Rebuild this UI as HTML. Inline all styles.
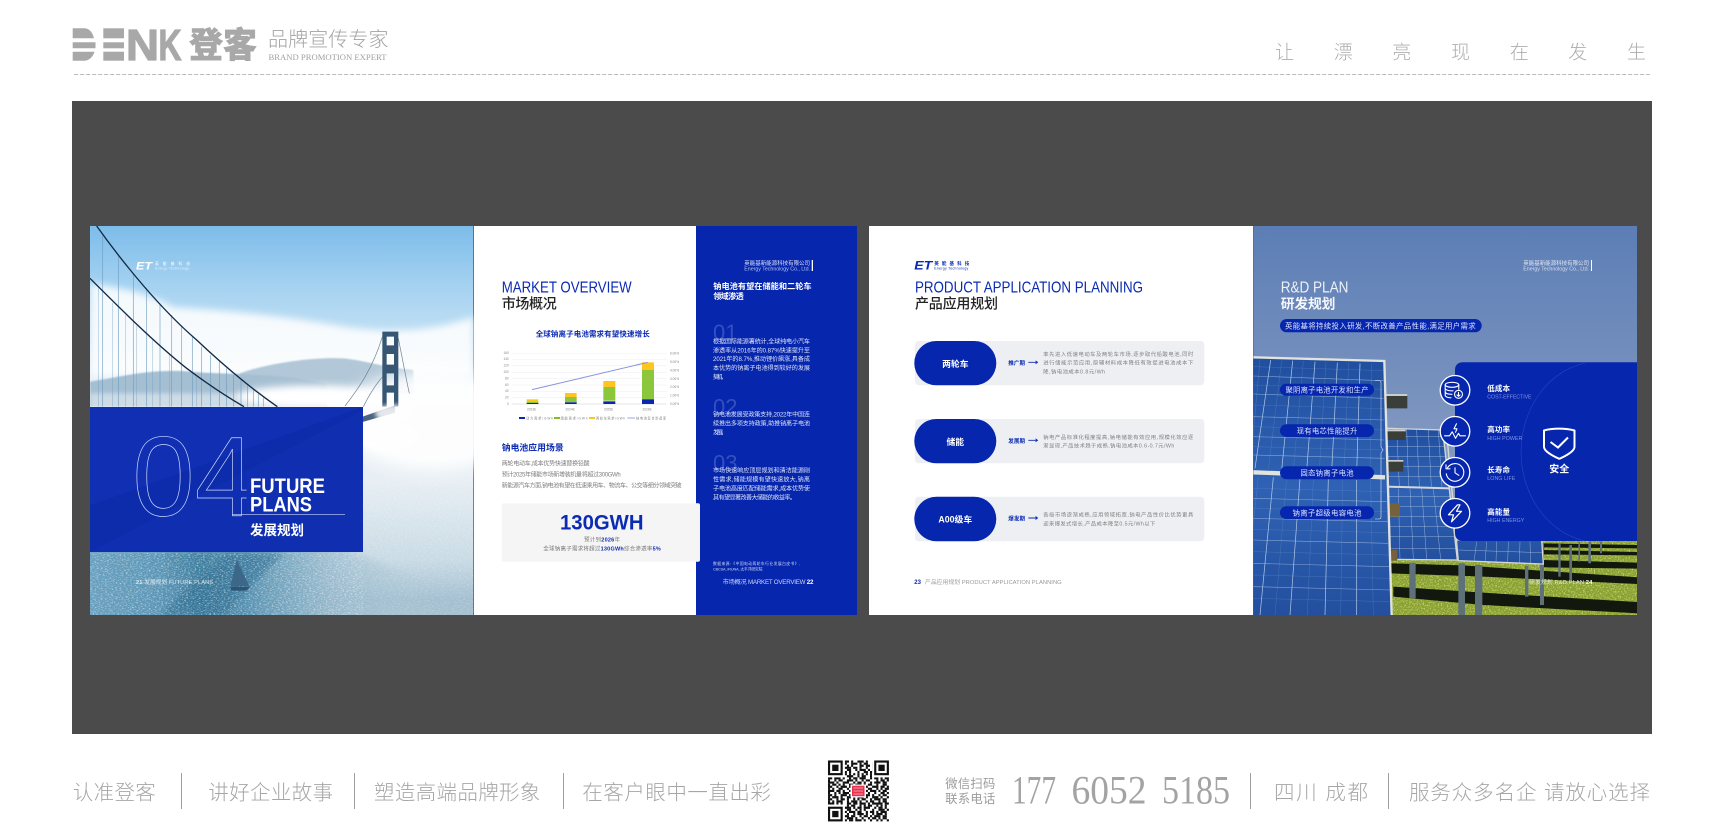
<!DOCTYPE html>
<html lang="zh"><head><meta charset="utf-8"><title>登客 DENK</title>
<style>
html,body{margin:0;padding:0;background:#fff;width:1717px;height:840px;overflow:hidden}
svg{display:block}
text{font-family:"Liberation Sans","Noto Sans CJK SC",sans-serif}
.t{font-weight:300;fill:#a6a6a6;font-size:20.5px}
.b{font-weight:700}
.w{fill:#fff}
.bl{fill:#0b2bb3}
.p{font-size:6px;fill:#7d7d7d}
.q{font-size:6.1px;fill:#dfe4fa}
.r{font-size:5.3px;fill:#7f7f7f}
.pw{font-size:7.4px;fill:#dfe4ff;text-anchor:middle}
.tick{font-size:3.2px;fill:#888}
.lab{font-size:7.5px;font-weight:700;fill:#fff}
.en{font-size:5.3px;fill:#8093e6}
.ser{font-family:"Liberation Serif","Noto Serif CJK SC",serif}
</style></head><body>
<svg width="1717" height="840" viewBox="0 0 1717 840" xmlns="http://www.w3.org/2000/svg">
<defs>
<filter id="b6" x="-30%" y="-30%" width="160%" height="160%"><feGaussianBlur stdDeviation="6"/></filter>
<filter id="b10" x="-20%" y="-30%" width="140%" height="160%"><feGaussianBlur stdDeviation="11"/></filter>
<filter id="b20" x="-40%" y="-60%" width="180%" height="220%"><feGaussianBlur stdDeviation="22"/></filter>
<filter id="b2"><feGaussianBlur stdDeviation="2.5"/></filter>
<filter id="spark" x="0" y="0" width="100%" height="100%"><feTurbulence type="fractalNoise" baseFrequency=".16 .42" numOctaves="2" seed="4"/><feColorMatrix values="0 0 0 0 1 0 0 0 0 1 0 0 0 0 1 3.2 0 0 0 -1.6"/></filter>
<filter id="grass" x="0" y="0" width="100%" height="100%"><feTurbulence type="fractalNoise" baseFrequency=".22" numOctaves="2" seed="9"/><feColorMatrix values="0 0 0 0 .86 0 0 0 0 .82 0 0 0 0 .25 2.6 0 0 0 -1.2"/></filter>
<linearGradient id="sky1" x1="0" y1="0" x2="0" y2="1"><stop offset="0" stop-color="#7dbcea"/><stop offset=".14" stop-color="#a1d0f0"/><stop offset=".3" stop-color="#c6e2f4"/><stop offset=".42" stop-color="#ecf3f8"/><stop offset=".65" stop-color="#e8eff4"/><stop offset=".86" stop-color="#c8dae4"/><stop offset=".96" stop-color="#a3bfd0"/><stop offset="1" stop-color="#a5c0cf"/></linearGradient>
<linearGradient id="water" x1="0" y1="0" x2="1" y2="0"><stop offset="0" stop-color="#6da3c1"/><stop offset=".22" stop-color="#5c96b6"/><stop offset=".32" stop-color="#3f7e9f"/><stop offset=".44" stop-color="#5a94b3"/><stop offset=".62" stop-color="#8fb4c9" stop-opacity=".75"/><stop offset=".88" stop-color="#b5cedb" stop-opacity="0"/></linearGradient>
<linearGradient id="sky2" x1="0" y1="0" x2="0" y2="1"><stop offset="0" stop-color="#5c7eb6"/><stop offset=".5" stop-color="#7d95bf"/><stop offset="1" stop-color="#98abc8"/></linearGradient>
<linearGradient id="pv" x1="0" y1="0" x2="0" y2="1"><stop offset="0" stop-color="#214f9f"/><stop offset=".5" stop-color="#2f62b4"/><stop offset="1" stop-color="#234f9e"/></linearGradient>
<clipPath id="c1"><rect x="90" y="226" width="384" height="389"/></clipPath>
<clipPath id="c2"><rect x="1253" y="226" width="384" height="389"/></clipPath>
</defs>

<!-- header -->
<g fill="#a8a8a8" stroke="#a8a8a8" stroke-width="1.200">
<text x="126" y="60" font-size="44" font-weight="700" textLength="33" lengthAdjust="spacingAndGlyphs">N</text>
<text x="158.500" y="60" font-size="44" font-weight="700" textLength="23" lengthAdjust="spacingAndGlyphs">K</text>
</g>
<text x="72" y="60" font-size="44" font-weight="700" fill="#a8a8a8" textLength="52" lengthAdjust="spacingAndGlyphs">DE</text>
<rect x="70" y="26" width="56" height="36" fill="#fff"/>
<g fill="#a8a8a8"><rect x="103.300" y="28.300" width="20.700" height="10"/><rect x="103.300" y="42.300" width="20.700" height="6"/><rect x="103.300" y="51.700" width="20.700" height="9"/>
<path d="M72.700 28.300H84C89 28.300 92.500 32 94 38.300H72.700ZM72.700 42.300H95.500V48.300H72.700ZM72.700 51.700H94.500C93 57 89 60.700 84 60.700H72.700Z"/></g>
<text x="189" y="57.500" font-size="35" font-weight="900" fill="#a8a8a8" stroke="#a8a8a8" stroke-width=".5" textLength="68" lengthAdjust="spacingAndGlyphs">登客</text>
<text x="268" y="46" font-size="20" font-weight="300" fill="#a3a3a3" textLength="120.500">品牌宣传专家</text>
<text x="268.500" y="60" font-size="8.600" fill="#a0a0a0" class="ser" textLength="118" lengthAdjust="spacingAndGlyphs">BRAND PROMOTION EXPERT</text>
<text x="1275 1333.700 1392.300 1451 1509.700 1568.300 1627" y="58.500" font-size="19" font-weight="300" fill="#adadad">让漂亮现在发生</text>
<path d="M74 74.500H1650" stroke="#bdbdbd" stroke-width="1" stroke-dasharray="4.300 1.700"/>

<rect x="72" y="101" width="1580" height="633" fill="#4b4b4b"/>

<!-- spread 1 : page photo -->
<g clip-path="url(#c1)"><g transform="translate(80 220) scale(.33333)">
<rect x="30" y="18" width="1150" height="1167" fill="url(#sky1)"/>
<path d="M30 190C100 200 200 215 280 262C400 268 600 285 800 322C950 342 1080 330 1180 290V470H30Z" fill="#fff" opacity=".88" filter="url(#b10)"/>
<path d="M480 460C560 430 700 410 790 415C850 420 900 440 1000 450L1000 520H480Z" fill="#b2c8d8" filter="url(#b2)"/>
<path d="M30 485C120 470 220 445 330 455C430 465 560 455 740 490L740 560H30Z" fill="#a5bfd2" filter="url(#b2)"/>
<path d="M30 520H740L800 560V570H30Z" fill="#eef3f7" opacity=".55" filter="url(#b6)"/>
<ellipse cx="1060" cy="600" rx="280" ry="150" fill="#fff" opacity=".92" filter="url(#b20)"/>
<ellipse cx="700" cy="530" rx="230" ry="34" fill="#fff" filter="url(#b10)"/>
<path d="M-40 985H790L1220 1150V1240H-40Z" fill="url(#water)" filter="url(#b10)"/>
<path d="M240 1185L440 1000H610L430 1185Z" fill="#2f6d92" opacity=".5" filter="url(#b6)"/>
<rect x="850" y="780" width="330" height="405" filter="url(#spark)" opacity=".3"/>
<rect x="30" y="1000" width="820" height="185" filter="url(#spark)" opacity=".62"/>
<path d="M470 1020L452 1098H508Z" fill="#3c6788"/><path d="M450 1100H510L500 1112H455Z" fill="#2d5573"/>
<!-- hangers -->
<g stroke="#6f9cc0" stroke-width="2.200" opacity=".85" fill="none">
<path d="M68 45V560M115 108V560M160 160V560M200 205V560M240 250V560M275 285V560M305 318V560M337 350V560M365 380V560M392 405V560M418 425V560M440 445V560M461 465V560M483 480V560M503 497V560M520 510V560M535 522V560M550 533V560"/>
<path d="M55 198V560M98 248V560M137 285V560M170 318V560M218 360V560M268 405V560M350 470V560" opacity=".6"/></g>
<path d="M50 18C130 130 240 265 350 360C440 445 520 510 592 560" fill="none" stroke="#122a46" stroke-width="4"/>
<path d="M30 175C120 265 220 365 320 445C380 490 440 530 492 560" fill="none" stroke="#122a46" stroke-width="4"/>
<!-- tower -->
<g><path d="M795 558C840 500 880 440 907 350M850 560C870 520 890 490 908 470M955 355C968 420 978 475 988 520" stroke="#6b7e90" stroke-width="2" fill="none"/>
<path fill-rule="evenodd" fill="#365673" d="M907 335H955V560H907ZM920 350V376H942V350ZM920 402V434H942V402ZM920 460V496H942V460ZM920 518V560H942V518Z"/>
<path d="M848 590L945 556V578L848 606Z" fill="#4a6580"/></g>
<ellipse cx="940" cy="580" rx="55" ry="26" fill="#fff" opacity=".85" filter="url(#b6)"/>
<ellipse cx="920" cy="650" rx="90" ry="40" fill="#fff" opacity=".8" filter="url(#b6)"/>
</g></g>
<!-- overlay -->
<rect x="90" y="407" width="273" height="145" fill="#102fb3"/>
<path d="M90 506L363 407V410L90 552Z" fill="#0c29a6" opacity=".55"/><path d="M90 552V505L363 407V552Z" fill="#0c2aa8" opacity=".25"/>
<text x="132.500" y="515.500" font-size="113" fill="none" stroke="#cdd6fb" stroke-width=".7" textLength="62" lengthAdjust="spacingAndGlyphs">0</text>
<text x="195" y="515.500" font-size="113" fill="none" stroke="#cdd6fb" stroke-width=".7" textLength="60" lengthAdjust="spacingAndGlyphs">4</text>
<rect x="246.500" y="470" width="6.500" height="43" fill="#102fb3"/>
<path d="M232 514.300H345" stroke="#cdd6fb" stroke-width=".7"/>
<text x="250" y="493" font-size="21" class="b w" textLength="75" lengthAdjust="spacingAndGlyphs">FUTURE</text>
<text x="250" y="511.500" font-size="21" class="b w" textLength="62" lengthAdjust="spacingAndGlyphs">PLANS</text>
<text x="250" y="535" font-size="13.500" class="b w" textLength="54">发展规划</text>
<text x="136" y="269.500" font-size="11" font-style="italic" class="b w" textLength="16" lengthAdjust="spacingAndGlyphs">ET</text>
<text x="155" y="265" font-size="3.800" class="w" textLength="35">英能基科技</text>
<text x="155" y="269.500" font-size="3.400" fill="#e8f2fa" textLength="34">Energy Technology</text>
<text x="136" y="584" font-size="5.600" fill="#dfe9f0" textLength="77"><tspan class="b">21</tspan> 发展规划 FUTURE PLANS</text>

<!-- page 2 white -->
<rect x="474" y="226" width="222" height="389" fill="#fff"/>
<rect x="696" y="226" width="161" height="389" fill="#0526ad"/>
<text x="501.700" y="292.700" font-size="15.500" class="bl" textLength="130" lengthAdjust="spacingAndGlyphs">MARKET OVERVIEW</text>
<text x="501.700" y="308.700" font-size="14" font-weight="500" fill="#222" textLength="55">市场概况</text>
<text x="535.700" y="336.500" font-size="7.500" class="b bl" textLength="114">全球钠离子电池需求有望快速增长</text>
<!-- chart -->
<g transform="translate(470 220) scale(.33333)">
<path d="M125 400H590M125 418H590M125 437H590M125 457H590M125 476H590M125 495H590M125 514H590M125 533H590" stroke="#ececec" stroke-width="1.500"/>
<path d="M125 552H590" stroke="#ccc" stroke-width="1.500"/>
<g fill="#ffc51e"><rect x="170" y="538" width="35" height="7"/><rect x="285" y="519" width="35" height="12"/><rect x="400" y="483" width="36" height="18"/><rect x="516" y="427" width="36" height="23"/></g>
<g fill="#8cc63a"><rect x="170" y="545" width="35" height="4"/><rect x="285" y="531" width="35" height="16"/><rect x="400" y="501" width="36" height="41"/><rect x="516" y="450" width="36" height="88"/></g>
<g fill="#0a25b0"><rect x="170" y="549" width="35" height="3"/><rect x="285" y="547" width="35" height="5"/><rect x="400" y="544" width="36" height="8"/><rect x="516" y="538" width="36" height="14"/></g>
<path d="M186 509L533 427" stroke="#8a93e0" stroke-width="3"/>
<rect x="147" y="591" width="18" height="6" fill="#0a25b0"/><rect x="252" y="591" width="18" height="6" fill="#7ec11f"/><rect x="357" y="591" width="18" height="6" fill="#ffc51e"/><path d="M472 594H495" stroke="#8a93e0" stroke-width="2.500"/>
</g>
<g class="tick">
<text x="503.500" y="354">160</text><text x="503.500" y="360">140</text><text x="503.500" y="366.500">120</text><text x="503.500" y="373">100</text><text x="505" y="379.500">80</text><text x="505" y="386">60</text><text x="505" y="392">40</text><text x="505" y="398.500">20</text><text x="507" y="405">0</text>
<text x="670" y="354.500">6.00%</text><text x="670" y="363">5.00%</text><text x="670" y="371.500">4.00%</text><text x="670" y="380">3.00%</text><text x="670" y="388">2.00%</text><text x="670" y="396.500">1.00%</text><text x="670" y="405">0.00%</text>
<text x="527" y="410.500">2023E</text><text x="565.500" y="410.500">2024E</text><text x="604" y="410.500">2025E</text><text x="642.500" y="410.500">2026E</text>
<text x="526" y="419.500" textLength="27">动力需求/GWh</text><text x="560.500" y="419.500" textLength="27">储能需求/GWh</text><text x="596" y="419.500" textLength="29">两轮车需求/GWh</text><text x="636" y="419.500" textLength="30">钠电池复合渗透率</text>
</g>
<text x="501.700" y="450.500" font-size="8.800" class="b bl" textLength="62">钠电池应用场景</text>
<text x="501.700" y="465.700" class="p" textLength="88">两轮电动车,成本优势快速替换铅酸</text>
<text x="501.700" y="476.700" class="p" textLength="119">预计2025年储能市场新增装机量将超过300GWh</text>
<text x="501.700" y="487.700" class="p" textLength="180">新能源汽车方面,钠电池有望在低速乘用车、物流车、公交等细分领域突破</text>
<rect x="501.700" y="503.300" width="198.300" height="58.400" rx="2" fill="#f5f5f5"/>
<text x="560" y="529.300" font-size="21" class="b bl" textLength="83.500" lengthAdjust="spacingAndGlyphs">130GWH</text>
<text x="584" y="541.500" font-size="5.500" fill="#777" textLength="36">预计到<tspan class="b bl">2026</tspan>年</text>
<text x="543.300" y="550.500" font-size="5.500" fill="#777" textLength="117.500">全球钠离子需求将超过<tspan class="b bl">130GWh</tspan>综合渗透率<tspan class="b bl">5%</tspan></text>

<!-- blue column -->
<text x="744.300" y="265" font-size="5.500" fill="#dfe4fa" textLength="65.700">英能基新能源科技有限公司</text>
<text x="744.300" y="270.700" font-size="5.300" fill="#b9c4f2" textLength="65.700">Energy Technology Co., Ltd.</text>
<rect x="811.700" y="260" width="1.300" height="11" fill="#fff"/>
<text x="713.300" y="289" font-size="8.200" class="b w" textLength="98.300">钠电池有望在储能和二轮车</text>
<text x="713.300" y="299" font-size="8" class="b w" textLength="30.500">领域渗透</text>
<g font-size="22" fill="#3450c0"><text x="713" y="340">01</text><text x="713" y="414.500">02</text><text x="713" y="470.500">03</text></g>
<text x="713" y="343.300" class="q" textLength="97">根据国际能源署统计,全球纯电小汽车</text>
<text x="713" y="352.300" class="q" textLength="97">渗透率从2016年的0.87%快速提升至</text>
<text x="713" y="361.200" class="q" textLength="97">2021年的8.7%,推动锂价飙涨,具备成</text>
<text x="713" y="370" class="q" textLength="97">本优势的钠离子电池得到较好的发展</text>
<text x="713" y="379" class="q" textLength="13.500">契机。</text>
<text x="713" y="416.700" class="q" textLength="97">钠电池发展受政策支持,2022年中国连</text>
<text x="713" y="425.700" class="q" textLength="97">续推出多项支持政策,助推钠离子电池</text>
<text x="713" y="434.700" class="q" textLength="14">发展。</text>
<text x="713" y="472.700" class="q" textLength="97">市场快速响应顶层规划和清洁能源刚</text>
<text x="713" y="481.700" class="q" textLength="97">性需求,储能规模有望快速放大,钠离</text>
<text x="713" y="490.300" class="q" textLength="97">子电池高度匹配储能需求,成本优势使</text>
<text x="713" y="499.300" class="q" textLength="83">其有望显著改善大储能的收益率。</text>
<text x="713" y="565" font-size="3.800" fill="#cfd6f6" textLength="87">数据来源:《中国电动两轮车行业发展白皮书》,</text>
<text x="713" y="570.500" font-size="3.800" fill="#cfd6f6" textLength="49.500">CBCSA, IRUNA, 太平洋研究院</text>
<text x="722.700" y="584" font-size="6.200" fill="#cfd6f6" textLength="90.700">市场概况 MARKET OVERVIEW <tspan class="b w">22</tspan></text>

<!-- spread 2 left -->
<rect x="869" y="226" width="384" height="389" fill="#fff"/>
<text x="914.300" y="269.500" font-size="12" font-style="italic" class="b bl" textLength="18" lengthAdjust="spacingAndGlyphs">ET</text>
<text x="934.300" y="265" font-size="4.600" class="b bl" textLength="35">英能基科技</text>
<text x="934.300" y="269.500" font-size="3.500" class="bl" textLength="34">Energy Technology</text>
<text x="915" y="292.700" font-size="15.500" class="bl" textLength="228" lengthAdjust="spacingAndGlyphs">PRODUCT APPLICATION PLANNING</text>
<text x="915" y="308.700" font-size="14" font-weight="500" fill="#222" textLength="83">产品应用规划</text>
<g fill="#eeeff3"><rect x="915" y="341" width="289.300" height="44.300" rx="4"/><rect x="915" y="419" width="289.300" height="44.300" rx="4"/><rect x="915" y="496.700" width="289.300" height="44.600" rx="4"/></g>
<g fill="#0526ad"><rect x="914.300" y="341" width="82" height="44.300" rx="22.100"/><rect x="914.300" y="419" width="82" height="44.300" rx="22.100"/><rect x="914.300" y="496.700" width="82" height="44.600" rx="22.300"/></g>
<g font-size="8.800" class="b w" text-anchor="middle"><text x="955.300" y="367">两轮车</text><text x="955.300" y="445">储能</text><text x="955.300" y="522.700">A00级车</text></g>
<g font-size="5.500" class="b bl"><text x="1008.300" y="365" textLength="16.700">推广期</text><text x="1008.300" y="443" textLength="16.700">发展期</text><text x="1008.300" y="520.500" textLength="16.700">爆发期</text></g>
<g stroke="#0b2bb3" stroke-width=".9" fill="none"><path d="M1028.300 362.300H1037.500M1035.500 360.800L1037.500 362.300L1035.500 363.800"/><path d="M1028.300 440.300H1037.500M1035.500 438.800L1037.500 440.300L1035.500 441.800"/><path d="M1028.300 518H1037.500M1035.500 516.500L1037.500 518L1035.500 519.500"/></g>
<text x="1043.300" y="356" class="r" textLength="150">率先进入低速电动车及两轮车市场,逐步取代铅酸电池,同时</text>
<text x="1043.300" y="364.700" class="r" textLength="150">进行储能示范应用,原辅材料成本降低有效促进电池成本下</text>
<text x="1043.300" y="373.700" class="r" textLength="61.700">降,钠电池成本0.8元/Wh</text>
<text x="1043.300" y="439" class="r" textLength="150">钠电产品标准化程度提高,钠电储能有效应用,规模化效应逐</text>
<text x="1043.300" y="447.700" class="r" textLength="131">渐显现,产品技术趋于成熟,钠电池成本0.6-0.7元/Wh</text>
<text x="1043.300" y="516.700" class="r" textLength="150">各级市场逐渐成熟,应用领域拓宽,钠电产品性价比优势更具</text>
<text x="1043.300" y="525.300" class="r" textLength="112">迎来爆发式增长,产品成本降至0.5元/Wh以下</text>
<text x="914.300" y="584" font-size="6" class="b bl">23</text>
<text x="925" y="584" font-size="5.800" fill="#9a9a9a" textLength="136.700">产品应用规划 PRODUCT APPLICATION PLANNING</text>

<!-- spread 2 right photo -->
<g clip-path="url(#c2)"><g transform="translate(1250 220) scale(.33333)">
<rect x="10" y="18" width="1152" height="1167" fill="url(#sky2)"/>
<rect x="420" y="960" width="742" height="225" fill="#86a032"/>
<rect x="420" y="960" width="742" height="225" filter="url(#grass)" opacity=".8"/>
<g fill="#13180e"><path d="M880 970L1162 975V985L880 982Z"/><path d="M880 990L1162 996V1006L880 1003Z"/><path d="M880 1020L1162 1028V1046L880 1042Z"/><path d="M420 1030L640 1036L1162 1072V1092L700 1070L420 1060Z"/><path d="M430 1100L700 1118L1162 1146V1180L700 1155L430 1130Z"/></g>
<g fill="#5e7078"><rect x="478" y="1028" width="19" height="107"/><rect x="625" y="1030" width="20" height="155"/><rect x="675" y="1035" width="22" height="150"/><rect x="825" y="1038" width="10" height="92"/><rect x="870" y="970" width="12" height="185"/><rect x="925" y="970" width="7" height="100"/><rect x="958" y="975" width="8" height="105"/><rect x="985" y="965" width="5" height="60"/><rect x="1015" y="965" width="8" height="65"/><rect x="1050" y="965" width="6" height="35"/></g>
<!-- back panels -->
<path d="M410 625L578 630L622 1020L420 1018Z" fill="url(#pv)" stroke="#d5d7d8" stroke-width="4"/>
<path d="M412 800L600 805" stroke="#d5d7d8" stroke-width="6"/>
<path d="M590 640L620 960H875L880 1032L625 1022Z" fill="url(#pv)" stroke="#d5d7d8" stroke-width="4"/>
<g stroke="#c2d3ec" stroke-width="1.500" opacity=".7" fill="none"><path d="M440 628L448 800M470 628L476 800M500 628L508 800M535 630L544 800M565 630L576 800M445 806L450 1018M480 806L490 1018M515 806L530 1018M550 806L572 1018M412 650H578M412 680H582M412 710H585M412 740H590M412 770H595M414 830H602M414 860H605M416 890H610M416 920H612M418 950H615M418 985H618M680 965L672 1025M710 965L705 1026M740 965L738 1027M775 965L773 1028M810 965L808 1030M840 965L842 1031M626 990L876 998"/></g>
<!-- mount -->
<g fill="#3a3e38"><path d="M406 522H472V565H406Z"/><path d="M408 628H467V660H408Z"/><path d="M412 720H460V755H412Z"/></g>
<g fill="#77603c"><path d="M416 850H450V890H416Z"/><path d="M420 990H442V1022H420Z"/></g>
<g fill="#c9cdd2"><rect x="406" y="522" width="66" height="6"/><rect x="408" y="628" width="59" height="6"/><rect x="412" y="720" width="48" height="5"/></g>
<!-- big panel -->
<path d="M10 412L403 423L425 1185H10Z" fill="url(#pv)"/>
<g stroke="#6f95cf" stroke-width="1.200" opacity=".55" fill="none">
<path d="M30 420L0 745M95 421L55 748M160 423L130 750M228 426L208 752M296 429L282 756M365 431L360 760M25 772L0 1000M110 775L75 1185M190 776L172 1185M278 778L272 1185M362 780L370 1185"/>
<path d="M10 440L400 452M10 495L400 508M10 555L402 566M10 620L402 630M10 680L404 690M10 805L408 815M10 865L410 875M10 928L412 938M10 995L416 1005M10 1065L418 1075M10 1135L422 1145"/></g>
<g stroke="#bcd0ec" stroke-width="2.200" opacity=".9" fill="none">
<path d="M62 420L15 745M128 422L95 750M195 425L170 752M262 428L245 755M330 430L320 760M70 772L30 1185M150 775L120 1185M235 777L225 1185M320 780L320 1185"/></g>
<g stroke="#9db8de" stroke-width="1.800" opacity=".8" fill="none">
<path d="M10 468L400 482M10 522L400 535M10 590L402 600M10 650L402 660M10 705L404 715M10 835L410 845M10 895L412 905M10 960L414 970M10 1030L418 1040M10 1100L420 1110"/></g>
<path d="M10 412L403 423L425 1185" fill="none" stroke="#e2e2de" stroke-width="7"/>
<path d="M10 757L405 772" stroke="#e2e2de" stroke-width="13"/>
</g></g>
<rect x="1280" y="319" width="201.700" height="13.300" rx="6.700" fill="#0626ad"/>
<text x="1285" y="328.700" font-size="7.400" fill="#dfe4ff" textLength="190.700">英能基将持续投入研发,不断改善产品性能,满足用户需求</text>
<text x="1280.700" y="292.700" font-size="15.500" fill="#eef1f8" textLength="67.700" lengthAdjust="spacingAndGlyphs">R&amp;D PLAN</text>
<text x="1280.700" y="308.700" font-size="13.800" class="b" fill="#f4f6fb" textLength="54.700">研发规划</text>
<text x="1523.300" y="265" font-size="5.500" fill="#e4e8f2" textLength="65.700">英能基新能源科技有限公司</text>
<text x="1523.300" y="270.700" font-size="5.300" fill="#d7deed" textLength="65.700">Energy Technology Co., Ltd.</text>
<rect x="1591" y="260" width="1" height="11" fill="#fff"/>
<g fill="#0626ad"><rect x="1280" y="383.700" width="94" height="12" rx="6"/><rect x="1280" y="424.300" width="94" height="12.700" rx="6.300"/><rect x="1280" y="466.300" width="94" height="13" rx="6.500"/><rect x="1280" y="506.300" width="94" height="12.700" rx="6.300"/></g>
<text x="1327" y="392.700" class="pw" textLength="83">聚阴离子电池开发和生产</text>
<text x="1327" y="433.300" class="pw" textLength="60.700">现有电芯性能提升</text>
<text x="1327" y="475.500" class="pw" textLength="53.300">固态钠离子电池</text>
<text x="1327" y="515.500" class="pw" textLength="69">钠离子超级电容电池</text>
<path d="M1375 380.500H1379C1380.500 380.500 1381 381 1381 382.500V447L1383 450L1381 453V517C1381 518.500 1380.500 519 1379 519H1375" fill="none" stroke="#dfe6f5" stroke-width=".6"/>
<!-- blue box -->
<path d="M1637 362.300H1463C1458 362.300 1455 365 1455 370V533C1455 538 1458 541 1463 541H1637Z" fill="#0626ad"/>
<path d="M1585 363C1545 372 1521 412 1521 452C1521 492 1545 532 1585 541" fill="none" stroke="#2b46bd" stroke-width=".6"/>
<g fill="#0626ad" stroke="#fff" stroke-width="1.300"><circle cx="1455" cy="390.300" r="14.800"/><circle cx="1455" cy="431.300" r="14.800"/><circle cx="1455" cy="472.300" r="14.800"/><circle cx="1455" cy="513.300" r="14.800"/></g>
<g fill="none" stroke="#fff" stroke-width="1.100" stroke-linejoin="round" stroke-linecap="round">
<g transform="translate(1455 390.300)"><ellipse cx="-3" cy="-5.500" rx="6.800" ry="2.500"/><path d="M-9.800 -5.500V5C-9.800 6.500 -7 7.500 -4 7.500M3.800 -5.500V-1M-9.800 -2C-9.800 -.5 -6 .8 -2 .5M-9.800 1.500C-9.800 3 -7 4 -3 4"/><circle cx="3.500" cy="4" r="4"/><path d="M3.500 2V6M2 4.700L3.500 6L5 4.700"/></g>
<g transform="translate(1455 431.300)"><path d="M-10.500 4.500H-5.500L-2.800 .5L.5 7L3.500 2L5 4.500H10.500"/><path d="M1.500 -7.500L-1 -2.500H2L.5 1" /></g>
<g transform="translate(1455 472.300)"><path d="M-7.500 -4.500A8.800 8.800 0 1 1 -8.700 1.500"/><path d="M-9 -7.500V-3.500H-5"/><path d="M0 -4.500V.5L3.800 3"/></g>
<g transform="translate(1455 513.300)"><path d="M2.500 -8.500L-6.500 1.500H-1.500L-3.500 8.500L6.500 -2H1.500L5 -8.500Z" stroke-width="1.200"/></g>
</g>
<text x="1487.300" y="391" class="lab" textLength="22.700">低成本</text><text x="1487.300" y="398.700" class="en" textLength="44.300">COST-EFFECTIVE</text>
<text x="1487.300" y="432" class="lab" textLength="22.700">高功率</text><text x="1487.300" y="440" class="en" textLength="35">HIGH POWER</text>
<text x="1487.300" y="472.700" class="lab" textLength="22.700">长寿命</text><text x="1487.300" y="480" class="en" textLength="28">LONG LIFE</text>
<text x="1487.300" y="514.300" class="lab" textLength="22.700">高能量</text><text x="1487.300" y="522" class="en" textLength="37">HIGH ENERGY</text>
<path d="M1544 430.500C1552 428 1566 428 1574.500 430.500V447C1574.500 451 1566 456 1559.300 458.800C1552.500 456 1544 451 1544 447Z" fill="none" stroke="#fff" stroke-width="2" stroke-linejoin="round"/>
<path d="M1550.500 442L1558 447.500L1568 437.500" fill="none" stroke="#fff" stroke-width="2"/>
<text x="1549.300" y="472.300" font-size="10" class="b w" textLength="20">安全</text>
<text x="1529.300" y="584" font-size="5.800" fill="#e3e6d8" textLength="63">研发规划 R&amp;D PLAN <tspan class="b w">24</tspan></text>

<!-- footer -->
<g stroke="#9f9f9f" stroke-width="1"><path d="M181.500 773V809M354.500 773V809M563.500 773V809M1250.500 773V809M1388.500 773V809"/></g>
<text x="72.800" y="799.500" class="t" textLength="83">认准登客</text>
<text x="208.300" y="799.500" class="t" textLength="124.700">讲好企业故事</text>
<text x="374" y="799.500" class="t" textLength="166.400">塑造高端品牌形象</text>
<text x="582.300" y="799.500" class="t" textLength="188.600">在客户眼中一直出彩</text>
<text x="945.300" y="788" font-size="12.300" fill="#9c9c9c" textLength="50">微信扫码</text>
<text x="945.300" y="803" font-size="12.300" fill="#9c9c9c" textLength="50">联系电话</text>
<g class="ser" font-size="40" fill="#a3a3a3"><text x="1012" y="803.300" class="ser" textLength="44" lengthAdjust="spacingAndGlyphs">177</text><text x="1071.500" y="803.300" class="ser" textLength="75" lengthAdjust="spacingAndGlyphs">6052</text><text x="1162" y="803.300" class="ser" textLength="68" lengthAdjust="spacingAndGlyphs">5185</text></g>
<text x="1274" y="799.500" class="t" textLength="94">四川 成都</text>
<text x="1409" y="799.500" class="t" textLength="241">服务众多名企 请放心选择</text>
<!-- QR -->
<g transform="translate(828 760.500) scale(2.100)" stroke="#111" stroke-width="1.020" fill="none">
<path d="M0 .5h29" stroke-dasharray="0 8 2 1 1 2 3 1 1 2 0 8"/>
<path d="M0 1.500h29" stroke-dasharray="0 8 1 2 3 1 1 1 2 2 1 7"/>
<path d="M0 2.500h29" stroke-dasharray="0 9 1 1 1 3 2 1 2 1 1 7"/>
<path d="M0 3.500h29" stroke-dasharray="0 8 3 1 2 1 1 2 1 2 1 7"/>
<path d="M0 4.500h29" stroke-dasharray="0 9 2 2 1 1 3 1 1 1 1 7"/>
<path d="M0 5.500h29" stroke-dasharray="0 8 1 1 1 3 1 2 2 1 2 7"/>
<path d="M0 6.500h29" stroke-dasharray="0 8 1 1 1 1 1 1 1 1 1 1 1 1 1 8"/>
<path d="M0 7.500h29" stroke-dasharray="0 9 3 2 1 1 2 2 1 8"/>
<path d="M0 8.500h29" stroke-dasharray="2 1 3 1 1 2 1 1 2 1 3 2 1 1 2 1 1 1 3"/>
<path d="M0 9.500h29" stroke-dasharray="1 2 1 1 2 2 3 1 1 2 1 1 2 3 1 1 2 1 1 1"/>
<path d="M0 10.500h29" stroke-dasharray="3 1 1 2 3 2 1 1 2 1 1 2 1 1 3 1 2 1"/>
<path d="M0 11.500h29" stroke-dasharray="1 1 2 1 1 1 1 2 2 1 3 1 1 1 2 2 1 2 2 1"/>
<path d="M0 12.500h29" stroke-dasharray="2 2 1 1 3 1 1 1 2 2 1 1 1 2 3 1 2 1"/>
<path d="M0 13.500h29" stroke-dasharray="1 1 1 2 2 2 1 1 3 3 1 1 2 2 1 1 1 1 2"/>
<path d="M0 14.500h29" stroke-dasharray="3 1 2 1 1 2 2 1 1 4 1 1 3 1 1 1 2 1"/>
<path d="M0 15.500h29" stroke-dasharray="1 2 1 1 1 1 3 2 1 3 2 1 1 2 1 2 2 1"/>
<path d="M0 16.500h29" stroke-dasharray="2 1 1 2 3 1 1 1 2 1 1 2 2 1 1 2 1 1 2"/>
<path d="M0 17.500h29" stroke-dasharray="1 1 3 1 1 2 2 1 1 1 3 1 1 2 3 1 1 2"/>
<path d="M0 18.500h29" stroke-dasharray="2 2 1 1 2 1 1 2 1 1 1 1 2 2 1 1 3 1 2"/>
<path d="M0 19.500h29" stroke-dasharray="1 1 1 1 3 2 1 1 3 1 1 2 1 1 2 2 1 1 2"/>
<path d="M0 20.500h29" stroke-dasharray="3 1 1 1 1 2 2 1 2 1 3 1 1 1 5 1 2"/>
<path d="M0 21.500h29" stroke-dasharray="0 9 1 1 2 2 1 1 1 1 2 2 1 1 1 1 1 1 1"/>
<path d="M0 22.500h29" stroke-dasharray="0 8 3 1 1 1 2 1 3 2 1 1 2 1 1 1"/>
<path d="M0 23.500h29" stroke-dasharray="0 9 2 2 1 1 1 1 1 3 1 2 3 1 1"/>
<path d="M0 24.500h29" stroke-dasharray="0 8 1 1 3 1 2 2 1 1 2 1 1 1 3 1"/>
<path d="M0 25.500h29" stroke-dasharray="0 9 1 2 1 1 3 1 1 2 1 1 3 1 1 1"/>
<path d="M0 26.500h29" stroke-dasharray="0 8 2 1 2 2 1 1 2 1 1 1 3 1 2 1"/>
<path d="M0 27.500h29" stroke-dasharray="0 9 3 1 1 2 1 2 1 1 2 1 1 1 2 1"/>
<path d="M0 28.500h29" stroke-dasharray="0 8 1 1 2 1 3 1 1 2 1 2 1 1 1 2 1"/>
<g stroke="none"><g fill="#fff"><rect x="0" y="0" width="8" height="8"/><rect x="21" y="0" width="8" height="8"/><rect x="0" y="21" width="8" height="8"/></g></g>
<g stroke-width="1.020"><rect x=".5" y=".5" width="6" height="6"/><rect x="22.500" y=".5" width="6" height="6"/><rect x=".5" y="22.500" width="6" height="6"/></g>
<g fill="#111" stroke="none"><rect x="2" y="2" width="3" height="3"/><rect x="24" y="2" width="3" height="3"/><rect x="2" y="24" width="3" height="3"/></g>
</g>
<rect x="850.500" y="784.500" width="15.500" height="13" fill="#fff"/>
<rect x="852" y="785.700" width="12.500" height="10.500" fill="#e8324f"/>
<path d="M853.500 788H863M853.500 791H863M853.500 794H863" stroke="#f9b9c4" stroke-width=".8"/>
</svg>
</body></html>
